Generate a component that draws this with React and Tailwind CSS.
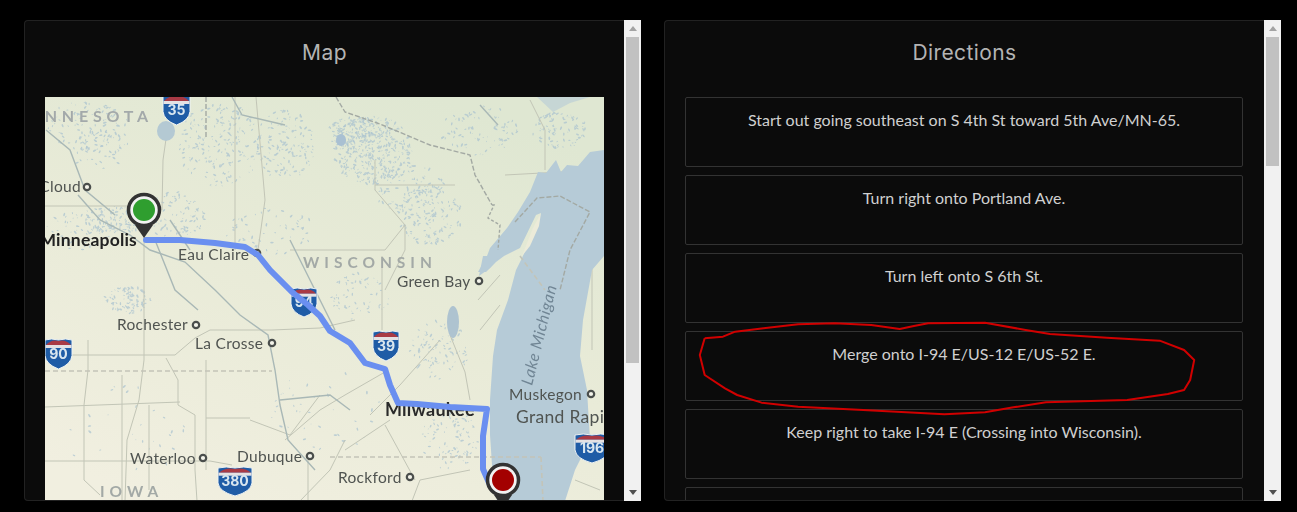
const LABEL = "Lato, 'Open Sans', sans-serif";
const HEAD = "Inter, 'Open Sans', sans-serif";

const steps = [
  "Start out going southeast on S 4th St toward 5th Ave/MN-65.",
  "Turn right onto Portland Ave.",
  "Turn left onto S 6th St.",
  "Merge onto I-94 E/US-12 E/US-52 E.",
  "Keep right to take I-94 E (Crossing into Wisconsin).",
  "",
];

function speckles(seed, cx, cy, rx, ry, n) {
  const out = [];
  let s = seed * 7919;
  const r = () => {
    s = (s * 16807) % 2147483647;
    return s / 2147483647;
  };
  for (let i = 0; i < n; i++) {
    const a = r() * 6.283;
    const d = Math.sqrt(r());
    out.push([cx + Math.cos(a) * d * rx, cy + Math.sin(a) * d * ry, 0.4 + r() * 0.9, r() * 3.14]);
  }
  return out;
}

const clusters = [
  [11, 372, 150, 40, 34, 420],
  [12, 350, 132, 22, 16, 110],
  [13, 88, 125, 40, 25, 90],
  [14, 115, 220, 32, 14, 130],
  [15, 220, 145, 42, 42, 200],
  [16, 285, 145, 30, 35, 140],
  [17, 430, 215, 32, 30, 150],
  [18, 560, 130, 28, 18, 90],
  [19, 128, 300, 24, 14, 100],
  [20, 80, 230, 40, 20, 70],
  [21, 360, 295, 30, 25, 60],
  [22, 440, 350, 30, 30, 90],
  [23, 450, 440, 30, 30, 90],
  [24, 175, 215, 30, 24, 90],
  [25, 100, 150, 30, 20, 60],
  [26, 410, 190, 35, 25, 90],
  [27, 270, 230, 45, 25, 60],
  [28, 330, 410, 60, 40, 40],
  [29, 120, 430, 70, 50, 30],
  [30, 480, 130, 40, 25, 80],
];

const roads = [
  "M45 355 H175 L195 338 L210 330 H272 L320 328 L355 320",
  "M168 125 L163 160 L162 210",
  "M144 238 V360 L139 400 L127 440 L125 501",
  "M45 461 H210 L232 465",
  "M45 407 L180 402",
  "M88 340 V370 L84 405 V480 L100 495",
  "M122 375 V500",
  "M149 405 V490",
  "M166 358 L178 380 V405 L195 415 V470 L197 501",
  "M206 360 V470",
  "M206 418 H250",
  "M250 420 L290 435 L320 395",
  "M308 460 V500",
  "M285 440 L320 410 L345 395 L385 372",
  "M45 206 H140",
  "M235 97 V250",
  "M290 250 H385 L405 225 L375 190 V160",
  "M375 185 H455",
  "M256 97 L265 200 L258 250",
  "M405 225 V250 L385 290",
  "M382 256 V330",
  "M450 335 L465 372 L470 400",
  "M440 340 L400 385 L370 415",
  "M390 420 L345 450",
  "M345 440 L330 470 L300 501",
  "M500 275 L478 300",
  "M470 470 L420 480 L412 501",
  "M385 425 L415 480",
  "M480 330 L500 305",
  "M598 170 L560 172 L505 175",
  "M530 100 L545 130 L545 170",
  "M592 240 V350",
  "M575 480 L600 490",
];

const rivers = [
  "M78 195 L100 220 L130 235 L150 250 L185 262 L215 290 L240 315 L268 335 L275 370 L280 405 L288 440 L315 470",
  "M46 130 L70 150 L85 190 L115 215",
  "M155 240 L175 290 L198 310",
  "M280 400 L330 395 L350 410",
  "M170 220 L190 250",
  "M480 105 L498 125",
  "M232 97 L242 115 L285 125",
  "M290 240 L310 280 L335 330",
];

const cities = [
  [87, 187], [196, 325], [272, 343], [479, 281], [591, 394], [203, 458], [310, 456], [410, 477], [257, 253],
];

const labels = [
  ["St. Cloud", 81, 192, 15.5, "end", "#505451", 400, 0.3],
  ["Eau Claire", 178, 260, 15.5, "start", "#505451", 400, 0.3],
  ["Green Bay", 397, 287, 15.5, "start", "#505451", 400, 0.3],
  ["Rochester", 117, 330, 15.5, "start", "#505451", 400, 0.3],
  ["La Crosse", 195, 349, 15.5, "start", "#505451", 400, 0.3],
  ["Muskegon", 509, 400, 15.5, "start", "#505451", 400, 0.3],
  ["Grand Rapids", 516, 423, 17.5, "start", "#505451", 400, 0.3],
  ["Waterloo", 130, 464, 15.5, "start", "#505451", 400, 0.3],
  ["Dubuque", 237, 462, 15.5, "start", "#505451", 400, 0.3],
  ["Rockford", 338, 483, 15.5, "start", "#505451", 400, 0.3],
  ["Minneapolis", 137, 246, 17.5, "end", "#222222", 700, 0.2],
  ["Milwaukee", 385, 416, 18, "start", "#2a2a2a", 700, 0.2],
];

function Shield({ x, y, w, h, n }) {
  const top = 9 * (h / 30);
  return (
    <g transform={`translate(${x} ${y})`}>
      <path
        d={`M1 1 Q${w / 4} -1 ${w / 2} 1 Q${(3 * w) / 4} -1 ${w - 1} 1 V${h * 0.55} Q${w - 2} ${h * 0.85} ${w / 2} ${h} Q2 ${h * 0.85} 1 ${h * 0.55} Z`}
        fill="#1f5ca6"
        stroke="#eef3f4"
        strokeWidth="1"
      />
      <path d={`M2 ${top - 3} Q${w / 4} 0 ${w / 2} 2 Q${(3 * w) / 4} 0 ${w - 2} ${top - 3} Z`} fill="#a93a45" />
      <rect x="1.5" y={top - 3} width={w - 3} height="3" fill="#e4e1e3" />
      <text
        x={w / 2}
        y={h * 0.67}
        textAnchor="middle"
        fontFamily={HEAD}
        fontWeight="700"
        fontSize={14}
        fill="#d9e6ef"
      >
        {n}
      </text>
    </g>
  );
}

function Pin({ x, y, fill, ring }) {
  return (
    <g>
      <path d={`M${x - 9} ${y + 15} L${x} ${y + 28} L${x + 9} ${y + 15} Z`} fill="#333333" />
      <circle cx={x} cy={y} r="15.5" fill="#f2f2f2" stroke="#333333" strokeWidth="3.5" />
      <circle cx={x} cy={y} r={ring} fill={fill} />
    </g>
  );
}

function MapPicture() {
  return (
    <svg viewBox="45 97 559 404" className="block w-[559px] h-[404px] blur-[0.6px]">
      <defs>
        <linearGradient id="land" x1="0.7" y1="0" x2="0.2" y2="1">
          <stop offset="0" stopColor="#dfe7d2" />
          <stop offset="0.5" stopColor="#e9ebd8" />
          <stop offset="1" stopColor="#f1efe0" />
        </linearGradient>
      </defs>
      <rect x="45" y="97" width="559" height="404" fill="url(#land)" />

      {clusters.map(([seed, cx, cy, rx, ry, n]) => (
        <g key={seed} fill="#a9c2d0" opacity="0.7">
          {speckles(seed, cx, cy, rx, ry, n).map(([x, y, r, a], i) => (
            <ellipse key={i} cx={x} cy={y} rx={r * 1.5} ry={r * 0.7} transform={`rotate(${a * 57} ${x} ${y})`} />
          ))}
        </g>
      ))}

      <g fill="none" stroke="#c2c5b6" strokeWidth="1">
        {roads.map((d) => (
          <path key={d} d={d} />
        ))}
      </g>
      <g fill="none" stroke="#a9b8b6" strokeWidth="1.4">
        {rivers.map((d) => (
          <path key={d} d={d} />
        ))}
      </g>

      {/* Lake Superior and Lake Michigan */}
      <path
        d="M604 150 L590 152 L578 166 L567 165 L561 172 L556 160 L546 173 L538 172 L530 192 L518 212 L507 228 L490 248 L487 256 L478 272 L486 272 L496 262 L504 256 L520 248 L536 215 L541 213 L530 240 L522 258 L516 270 L508 300 L497 330 L493 356 L490 400 L490 435 L492 465 L497 501 L565 501 L575 470 L590 440 L587 390 L580 356 L583 320 L592 270 L604 256 Z"
        fill="#b6cbd7"
      />
      <path d="M541 213 L533 228 L522 256 L530 246 L539 226 Z" fill="#ecebd9" />
      <path d="M483 256 L500 256 L490 268 L479 276 Z" fill="#b6cbd7" />
      <path d="M537 97 H590 L570 103 L553 112 Z" fill="#b6cbd7" opacity="0.6" />
      <ellipse cx="453" cy="322" rx="6" ry="16" fill="#aec3d0" />
      <ellipse cx="166" cy="131" rx="9" ry="10" fill="#b4c9d3" />
      <ellipse cx="341" cy="140" rx="5" ry="6" fill="#a9c0d2" />

      {/* Borders */}
      <g fill="none" stroke="#c3c4b8" strokeWidth="1.6" strokeDasharray="5 3">
        <path d="M45 371 H272" />
        <path d="M330 457 H541" />
        <path d="M541 457 L543 501" />
        <path d="M520 256 L545 290" />
      </g>
      <g fill="none" stroke="#a3a9a3" strokeWidth="1.4" strokeDasharray="5 2">
        <path d="M206 97 V138" />
        <path d="M336 97 L345 112 L380 124 L430 145 L470 155 L475 175 L492 205" />
        <path d="M492 205 L494 205 L488 218 L500 225 L498 250" strokeDasharray="3 2" />
        <path d="M515 222 L537 198 L560 196 L590 212 L570 250 L560 290" />
      </g>

      {/* Labels */}
      <g fontFamily={LABEL}>
        <text x="153" y="122" fontSize="16" fontWeight="700" textAnchor="end" fill="#a3a9aa" letterSpacing="4.8">
          MINNESOTA
        </text>
        <text x="303" y="268" fontSize="15.5" fontWeight="700" fill="#a3a9a6" letterSpacing="5">
          WISCONSIN
        </text>
        <text x="100" y="497" fontSize="15.5" fontWeight="700" fill="#a3a9a6" letterSpacing="5">
          IOWA
        </text>
        <text
          transform="translate(532 386) rotate(-76)"
          fontSize="16"
          fontStyle="italic"
          fill="#708594"
          letterSpacing="0.6"
        >
          Lake Michigan
        </text>
        {labels.map(([t, x, y, size, anchor, fill, weight, spacing]) => (
          <text
            key={t}
            x={x}
            y={y}
            fontSize={size}
            textAnchor={anchor}
            fill={fill}
            fontWeight={weight}
            letterSpacing={spacing}
          >
            {t}
          </text>
        ))}
      </g>
      <g fill="#f3f3ea" stroke="#4a4e4c" strokeWidth="2.2">
        {cities.map(([x, y]) => (
          <circle key={x} cx={x} cy={y} r="3.2" />
        ))}
      </g>

      <Shield x={162} y={95} w={29} h={30} n="35" />
      <Shield x={44} y={339} w={29} h={30} n="90" />
      <Shield x={290} y={288} w={28} h={29} n="94" />
      <Shield x={372} y={331} w={28} h={30} n="39" />
      <Shield x={217} y={467} w={36} h={29} n="380" />
      <Shield x={574} y={434} w={36} h={29} n="196" />

      <path
        d="M146 240 L180 240 L215 243 L245 247 L258 255 L270 270 L283 283 L292 292 L308 305 L320 316 L330 331 L350 343 L365 363 L385 369 L390 385 L398 403 L417 404 L450 407 L487 409 L483 436 L483 469 L490 485"
        fill="none"
        stroke="#6a8ff0"
        strokeWidth="6"
        strokeLinejoin="round"
        strokeLinecap="round"
      />
      <Pin x={144} y={210} fill="#2f9e2f" ring={11} />
      <Pin x={503} y={480} fill="#a30000" ring={11} />
    </svg>
  );
}

function Scrollbar({ thumb }) {
  return (
    <div className="w-[17px] h-full bg-[#f1f1f1] flex flex-col shrink-0">
      <div className="h-[17px] flex items-center justify-center">
        <div className="w-0 h-0 border-x-[4px] border-x-transparent border-b-[5px] border-b-[#a3a3a3]" />
      </div>
      <div className="flex-1 px-[2px]">
        <div className={`bg-[#c1c1c1] w-full ${thumb}`} />
      </div>
      <div className="h-[17px] flex items-center justify-center">
        <div className="w-0 h-0 border-x-[4px] border-x-transparent border-t-[5px] border-t-[#505050]" />
      </div>
    </div>
  );
}

function Panel({ title, thumb, children }) {
  return (
    <div className="w-[617px] h-[481px] flex">
      <div className="w-[600px] h-full bg-[#0b0b0b] border border-[#222222] border-r-0 rounded-l-[4px] overflow-hidden flex flex-col">
        <h2
          className="h-[76px] shrink-0 pt-[18px] text-center text-[21px] leading-[28px] tracking-[0.4px] font-normal text-[#b4b4b4]"
          style={{ fontFamily: HEAD }}
        >
          {title}
        </h2>
        <div className="flex-1 min-h-0 pl-[20px] pr-[20px] overflow-hidden">{children}</div>
      </div>
      <Scrollbar thumb={thumb} />
    </div>
  );
}

const inkPoints =
  "110,115 155,110 185,95 255,85 340,73 430,70 520,75 590,87 625,78 660,70 800,68 900,90 960,102 1100,113 1230,122 1290,150 1315,180 1305,240 1290,270 1250,282 1150,300 950,307 870,322 800,337 700,343 500,330 340,320 250,308 190,285 160,265 110,225 98,165 110,115";

export default function App() {
  return (
    <div className="relative w-[1297px] h-[512px] overflow-hidden bg-black pt-[20px] pl-[24px] flex gap-[23px]">
      <Panel title="Map" thumb="h-[326px]">
        <MapPicture />
      </Panel>
      <Panel title="Directions" thumb="h-[129px]">
        <div className="flex flex-col gap-[8px] w-[558px]">
          {steps.map((s, i) => (
            <div
              key={i}
              className="h-[70px] shrink-0 border border-[#333333] rounded-[2px] pt-[10px] text-center text-[16px] leading-[24px] text-[#d0d0d0]"
              style={{ fontFamily: LABEL }}
            >
              {s}
            </div>
          ))}
        </div>
      </Panel>
      <svg
        viewBox="0 0 1568 636"
        preserveAspectRatio="none"
        className="absolute left-[660px] top-[300px] w-[637px] h-[212px] pointer-events-none"
      >
        <polyline
          points={inkPoints}
          fill="none"
          stroke="#d10000"
          strokeWidth="2"
          vectorEffect="non-scaling-stroke"
          strokeLinejoin="round"
        />
      </svg>
    </div>
  );
}
